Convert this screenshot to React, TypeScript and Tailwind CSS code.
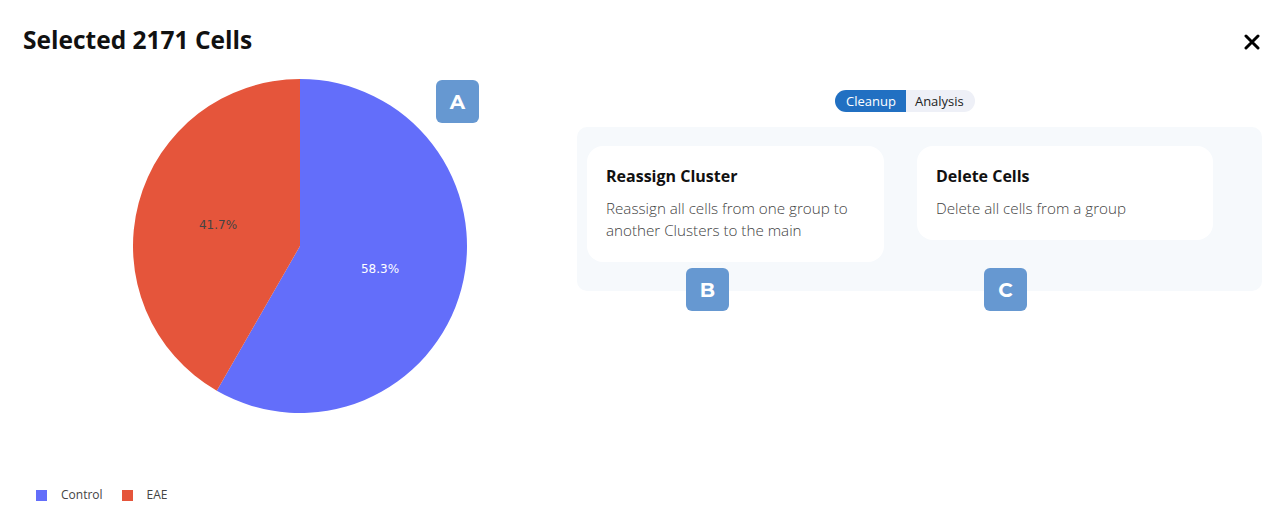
import React from 'react';

const CX = 167;
const CY = 167;
const R = 167;

function slicePath(start: number, end: number) {
  const a0 = (start * Math.PI) / 180;
  const a1 = (end * Math.PI) / 180;
  const x0 = CX + R * Math.sin(a0);
  const y0 = CY - R * Math.cos(a0);
  const x1 = CX + R * Math.sin(a1);
  const y1 = CY - R * Math.cos(a1);
  const large = end - start > 180 ? 1 : 0;
  return `M${CX},${CY} L${x0},${y0} A${R},${R} 0 ${large} 1 ${x1},${y1} Z`;
}

function Badge({ letter, className }: { letter: string; className: string }) {
  return (
    <div
      className={`absolute w-[43px] h-[43px] rounded-[6px] bg-[#6698d1] flex items-center justify-center text-white text-[20px] font-bold ${className}`}
      style={{ fontFamily: 'Montserrat, "Open Sans", sans-serif' }}
    >
      {letter}
    </div>
  );
}

function ActionCard({ title, text, width }: { title: string; text: React.ReactNode; width: string }) {
  return (
    <div className={`bg-white rounded-[16px] pl-[19px] pr-4 pt-[19px] pb-[21px] ${width}`}>
      <div className="text-[16px] font-bold text-[#111] leading-[22px]">{title}</div>
      <div className="mt-[10px] text-[15.2px] font-light text-[#3f3f3f] leading-[22px]">{text}</div>
    </div>
  );
}

export default function App() {
  const blue = 58.3;
  const blueEnd = (blue / 100) * 360;

  return (
    <div
      className="relative w-[1280px] h-[516px] bg-white overflow-hidden"
      style={{ fontFamily: '"Open Sans", sans-serif' }}
    >
      <div className="flex justify-between items-start pl-[23px] pr-[20px] pt-[23px]">
        <h1 className="text-[24.5px] font-bold text-[#111] leading-[34px]">Selected 2171 Cells</h1>
        <button className="mt-[11px] text-black">
          <svg width="16" height="16" viewBox="0 0 16 16" fill="none" stroke="currentColor" strokeWidth="3" strokeLinecap="round">
            <path d="M2 2 L14 14 M14 2 L2 14" />
          </svg>
        </button>
      </div>

      <div className="flex mt-[22px]">
        <div className="w-[577px] flex flex-col">
          <div className="ml-[133px] relative w-[334px] h-[334px]">
            <svg width="334" height="334" viewBox="0 0 334 334">
              <path d={slicePath(0, blueEnd)} fill="#636efa" />
              <path d={slicePath(blueEnd, 360)} fill="#e5553b" />
              <text
                x="247"
                y="194"
                textAnchor="middle"
                fill="#ffffff"
                fontSize="12"
                fontFamily='"DejaVu Sans", sans-serif'
              >
                58.3%
              </text>
              <text
                x="85"
                y="150"
                textAnchor="middle"
                fill="#444444"
                fontSize="12"
                fontFamily='"DejaVu Sans", sans-serif'
              >
                41.7%
              </text>
            </svg>
          </div>
          <div className="flex items-center pl-[36px] mt-[73px] text-[12px] text-[#444]">
            <span className="w-[11px] h-[11px] bg-[#636efa]" />
            <span className="ml-[14px]">Control</span>
            <span className="ml-[19px] w-[11px] h-[11px] bg-[#e5553b]" />
            <span className="ml-[14px]">EAE</span>
          </div>
        </div>

        <div className="w-[685px] flex flex-col">
          <div className="pl-[258px] pt-[9px]">
            <div className="inline-flex text-[13px] leading-[22px]">
              <span className="bg-[#2170c2] text-white pl-[11px] pr-[10px] rounded-l-full">Cleanup</span>
              <span className="bg-[#eef0f7] text-[#222] pl-[9px] pr-[11px] rounded-r-full">Analysis</span>
            </div>
          </div>
          <div className="mt-[15px] h-[164px] bg-[#f6f9fc] rounded-[10px] pl-[10px] pt-[19px] flex items-start gap-[33px]">
            <ActionCard
              title="Reassign Cluster"
              width="w-[297px]"
              text={
                <>
                  Reassign all cells from one group to
                  <br />
                  another Clusters to the main
                </>
              }
            />
            <ActionCard title="Delete Cells" width="w-[296px]" text="Delete all cells from a group" />
          </div>
        </div>
      </div>

      <Badge letter="A" className="left-[436px] top-[80px]" />
      <Badge letter="B" className="left-[686px] top-[268px]" />
      <Badge letter="C" className="left-[984px] top-[268px]" />
    </div>
  );
}
